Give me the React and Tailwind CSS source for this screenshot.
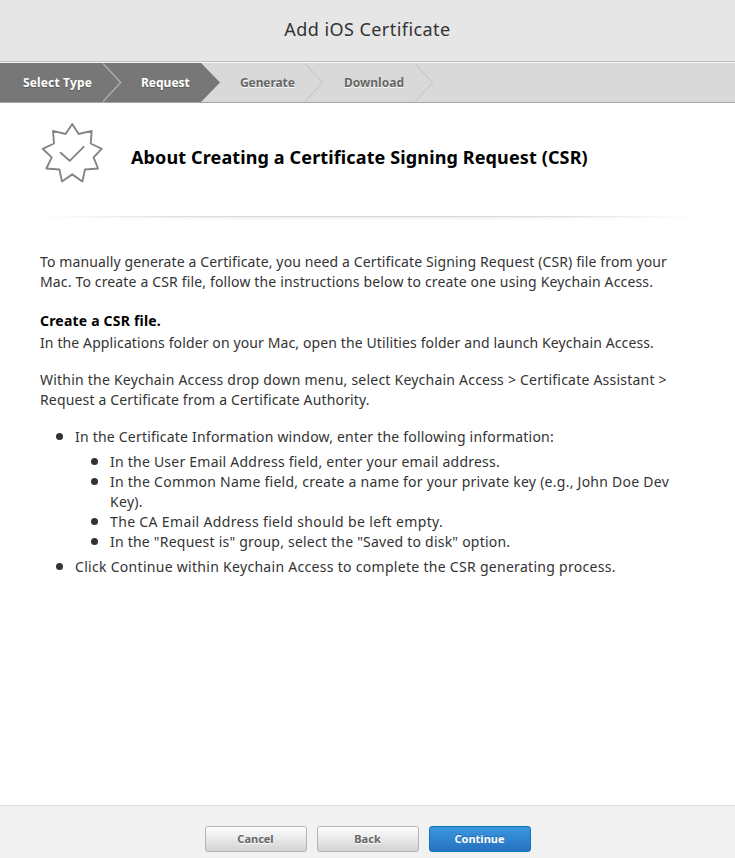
const steps = {
  done: 'text-white [text-shadow:0_1px_1px_#555]',
  todo: 'text-[#666] [text-shadow:0_1px_0_#fff]',
};

function Chevron({ color }) {
  return (
    <svg className="h-[39px] w-[19px] shrink-0" viewBox="0 0 19 39" fill="none">
      <path d="M0 0.5 L17.7 19.5 L0 38.5" stroke={color} strokeWidth="1.3" />
    </svg>
  );
}

function Progress() {
  return (
    <nav className="flex h-[40px] items-center border-b border-[#a6a6a6] bg-[#d9d9d9] text-[12px] font-bold">
      <div className="flex h-full items-center bg-[#777]">
        <span className={`w-[103px] pl-[23px] tracking-[0.15px] ${steps.done}`}>Select Type</span>
        <Chevron color="#b0b0b0" />
        <span className={`w-[79px] pl-[19px] ${steps.done}`}>Request</span>
      </div>
      <svg className="h-[39px] w-[19px] shrink-0" viewBox="0 0 19 39">
        <path d="M0 0 L19 19.5 L0 39Z" fill="#777" />
      </svg>
      <span className={`w-[85px] pl-[20px] tracking-[-0.1px] ${steps.todo}`}>Generate</span>
      <Chevron color="#cacaca" />
      <span className={`w-[91px] pl-[20px] ${steps.todo}`}>Download</span>
      <Chevron color="#cacaca" />
    </nav>
  );
}

function Bullet({ children }) {
  return (
    <li className="flex">
      <span className="mt-[6px] mr-[12px] ml-[-19px] h-[7px] w-[7px] shrink-0 rounded-full bg-[#333]" />
      <div className="whitespace-nowrap">{children}</div>
    </li>
  );
}

function Button({ children, primary }) {
  return (
    <button
      className={`h-[26px] w-[102px] rounded-[3px] border text-[11px] font-bold ${
        primary
          ? 'border-[#0d75bb] bg-linear-to-b from-[#3b99e0] to-[#2671c0] text-white [text-shadow:0_-1px_0_#2068a8]'
          : 'border-[#b4b4b4] bg-linear-to-b from-white to-[#d2d2d2] text-[#666] [text-shadow:0_1px_0_#fff]'
      }`}
    >
      {children}
    </button>
  );
}

export default function App() {
  return (
    <div className="flex h-[858px] w-[735px] flex-col overflow-hidden bg-white font-['Noto_Sans','Open_Sans',sans-serif] text-[14px] leading-[20px] text-[#333]">
      <header className="flex h-[63px] flex-col bg-[#e6e6e6]">
        <h1 className="flex h-[61px] items-center justify-center pb-[3px] text-[18px] tracking-[0.44px]">Add iOS Certificate</h1>
        <div className="h-px bg-[#bdbdbd]" />
        <div className="h-px bg-[#f8f8f8]" />
      </header>
      <Progress />
      <main className="flex h-[702px] flex-col">
        <div className="flex h-[113px] pl-[41px]">
          <svg className="mt-[19px] h-[62px] w-[62px]" viewBox="0 0 62 62" fill="none" stroke="#858585" strokeWidth="1.9" strokeLinejoin="round" strokeLinecap="round">
            <path d="M31.2 1.9 L37.6 12 L50.7 8.9 L49.7 21.5 L60.7 26.8 L52.6 35.4 L57 46.5 L44 47.5 L41.4 59.5 L31.2 52.4 L21 59.5 L18.4 47.5 L5.4 46.5 L10.7 35.4 L1.7 26.8 L13 21.5 L12 8.9 L24.6 12Z" />
            <path d="M19.6 30.8 L28.7 38.8 L42.7 24.8" />
          </svg>
          <h2 className="mt-[42px] ml-[28px] text-[18px] leading-[24px] font-bold tracking-[0.125px] whitespace-nowrap text-black">
            About Creating a Certificate Signing Request (CSR)
          </h2>
        </div>
        <div className="mx-[38px] h-px bg-[linear-gradient(to_right,#fff,#dedede_22%,#d8d8d8_50%,#dedede_78%,#fff)]" />
        <div className="mx-[38px] h-px bg-[linear-gradient(to_right,#fff,#eee_25%,#eee_75%,#fff)]" />
        <div className="mx-[38px] h-[2px] bg-[linear-gradient(to_right,#fff,#f9f9f9_30%,#f9f9f9_70%,#fff)]" />
        <section className="pt-[32px] pl-[40px] whitespace-nowrap">
          <p>
            <span className="block tracking-[0.12px]">To manually generate a Certificate, you need a Certificate Signing Request (CSR) file from your</span>
            <span className="block tracking-[0.152px]">Mac. To create a CSR file, follow the instructions below to create one using Keychain Access.</span>
          </p>
          <h3 className="mt-[19px] font-bold tracking-[0.2px] text-black">Create a CSR file.</h3>
          <p className="mt-[2px] tracking-[0.115px]">In the Applications folder on your Mac, open the Utilities folder and launch Keychain Access.</p>
          <p className="mt-[17px]">
            <span className="block tracking-[0.22px]">Within the Keychain Access drop down menu, select Keychain Access &gt; Certificate Assistant &gt;</span>
            <span className="block tracking-[0.155px]">Request a Certificate from a Certificate Authority.</span>
          </p>
          <ul className="mt-[17px] pl-[35px]">
            <Bullet><span className="tracking-[0.21px]">In the Certificate Information window, enter the following information:</span></Bullet>
            <ul className="my-[5px] pl-[35px]">
              <Bullet><span className="tracking-[0.23px]">In the User Email Address field, enter your email address.</span></Bullet>
              <Bullet>
                <span className="block tracking-[0.255px]">In the Common Name field, create a name for your private key (e.g., John Doe Dev</span>
                <span className="block tracking-[0.3px]">Key).</span>
              </Bullet>
              <Bullet><span className="tracking-[0.35px]">The CA Email Address field should be left empty.</span></Bullet>
              <Bullet><span className="tracking-[0.22px]">In the "Request is" group, select the "Saved to disk" option.</span></Bullet>
            </ul>
            <Bullet><span className="tracking-[0.295px]">Click Continue within Keychain Access to complete the CSR generating process.</span></Bullet>
          </ul>
        </section>
      </main>
      <footer className="flex h-[53px] justify-center gap-[10px] border-t border-[#ddd] bg-[#f1f1f1] pt-[20px]">
        <Button>Cancel</Button>
        <Button>Back</Button>
        <Button primary>Continue</Button>
      </footer>
    </div>
  );
}
